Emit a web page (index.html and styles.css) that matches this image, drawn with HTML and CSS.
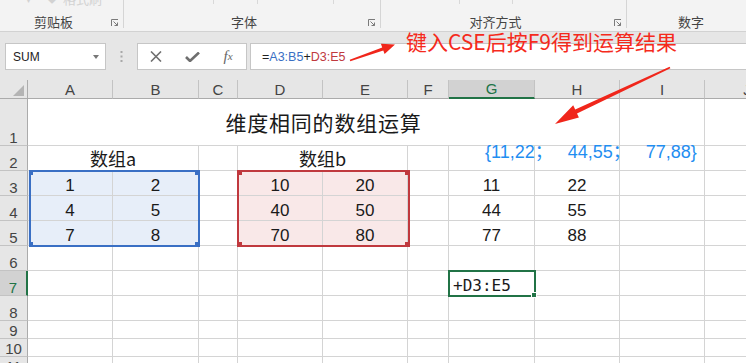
FILE: index.html
```html
<!DOCTYPE html>
<html lang="zh-CN">
<head>
  <meta charset="UTF-8">
  <title>维度相同的数组运算</title>
  <link rel="stylesheet" href="styles.css">
</head>
<body>
  <div class="ribbon">
    <div class="grp g1">
      <div class="gtop"><span class="ghost gdrop">▾</span><span class="ghost gicon">◆</span><span class="ghost gtext">格式刷</span></div>
      <div class="gfoot"><span class="glabel">剪贴板</span><svg class="launch" viewBox="0 0 8 8"><path d="M.5 7V.5H7M2.5 2.5l4 4M3.5 6.5h3v-3" /></svg></div>
    </div>
    <div class="grp g2">
      <div class="gtop"><i class="tick" style="margin-left:89px"></i><i class="tick" style="margin-left:43px"></i><i class="tick" style="margin-left:75px"></i></div>
      <div class="gfoot"><span class="glabel">字体</span><svg class="launch" viewBox="0 0 8 8"><path d="M.5 7V.5H7M2.5 2.5l4 4M3.5 6.5h3v-3" /></svg></div>
    </div>
    <div class="grp g3">
      <div class="gtop"><i class="tick" style="margin-left:78px"></i><i class="tick" style="margin-left:52px"></i></div>
      <div class="gfoot"><span class="glabel">对齐方式</span><svg class="launch" viewBox="0 0 8 8"><path d="M.5 7V.5H7M2.5 2.5l4 4M3.5 6.5h3v-3" /></svg></div>
    </div>
    <div class="grp g4">
      <div class="gtop"></div>
      <div class="gfoot"><span class="glabel">数字</span><svg class="launch" viewBox="0 0 8 8"><path d="M.5 7V.5H7M2.5 2.5l4 4M3.5 6.5h3v-3" /></svg></div>
    </div>
  </div>

  <div class="fbar">
    <div class="namebox"><span>SUM</span><span class="caret"></span></div>
    <div class="dots"><svg width="3" height="11" viewBox="0 0 3 11"><rect x="0.5" y="0" width="2" height="2"/><rect x="0.5" y="4.5" width="2" height="2"/><rect x="0.5" y="9" width="2" height="2"/></svg></div>
    <div class="btns">
      <span class="btn"><svg width="12" height="11" viewBox="0 0 12 11"><path d="M1 .5l10 10M11 .5l-10 10" /></svg></span>
      <span class="btn"><svg class="ok" width="15" height="10" viewBox="0 0 15 10"><path d="M1 5l4 4 9-8.5" /></svg></span>
      <span class="btn fx">f<small>x</small></span>
    </div>
    <div class="formula">=<span class="ref-a">A3:B5</span>+<span class="ref-d">D3:E5</span></div>
  </div>

  <div class="sheet">
    <div class="hd corner"><span class="tri"></span></div>
    <div class="hd">A</div><div class="hd">B</div><div class="hd">C</div><div class="hd">D</div><div class="hd">E</div>
    <div class="hd">F</div><div class="hd on">G</div><div class="hd">H</div><div class="hd">I</div><div class="hd">J</div>

    <div class="rh">1</div><div class="c title">维度相同的数组运算</div><div class="c"></div><div class="c"></div>

    <div class="rh">2</div><div class="c cap">数组a</div><div class="c"></div><div class="c cap">数组b</div>
    <div class="c"></div><div class="c"></div><div class="c"></div><div class="c"></div><div class="c"></div>

    <div class="rh">3</div><div class="c ba">1</div><div class="c ba">2</div><div class="c"></div><div class="c rd">10</div><div class="c rd">20</div>
    <div class="c"></div><div class="c">11</div><div class="c">22</div><div class="c"></div><div class="c"></div>

    <div class="rh">4</div><div class="c ba">4</div><div class="c ba">5</div><div class="c"></div><div class="c rd">40</div><div class="c rd">50</div>
    <div class="c"></div><div class="c">44</div><div class="c">55</div><div class="c"></div><div class="c"></div>

    <div class="rh">5</div><div class="c ba">7</div><div class="c ba">8</div><div class="c"></div><div class="c rd">70</div><div class="c rd">80</div>
    <div class="c"></div><div class="c">77</div><div class="c">88</div><div class="c"></div><div class="c"></div>

    <div class="rh">6</div><div class="c"></div><div class="c"></div><div class="c"></div><div class="c"></div><div class="c"></div>
    <div class="c"></div><div class="c"></div><div class="c"></div><div class="c"></div><div class="c"></div>

    <div class="rh on">7</div><div class="c"></div><div class="c"></div><div class="c"></div><div class="c"></div><div class="c"></div>
    <div class="c"></div><div class="c edit">+D3:E5</div><div class="c"></div><div class="c"></div><div class="c"></div>

    <div class="rh">8</div><div class="c"></div><div class="c"></div><div class="c"></div><div class="c"></div><div class="c"></div>
    <div class="c"></div><div class="c"></div><div class="c"></div><div class="c"></div><div class="c"></div>

    <div class="rh">9</div><div class="c"></div><div class="c"></div><div class="c"></div><div class="c"></div><div class="c"></div>
    <div class="c"></div><div class="c"></div><div class="c"></div><div class="c"></div><div class="c"></div>

    <div class="rh">10</div><div class="c"></div><div class="c"></div><div class="c"></div><div class="c"></div><div class="c"></div>
    <div class="c"></div><div class="c"></div><div class="c"></div><div class="c"></div><div class="c"></div>

    <div class="rh">11</div><div class="c"></div><div class="c"></div><div class="c"></div><div class="c"></div><div class="c"></div>
    <div class="c"></div><div class="c"></div><div class="c"></div><div class="c"></div><div class="c"></div>

    <!-- range highlights and active cell sit over the grid -->
    <div class="rng blue"><i class="hdl tl"></i><i class="hdl tr"></i><i class="hdl bl"></i><i class="hdl br"></i></div>
    <div class="rng red"><i class="hdl tl"></i><i class="hdl tr"></i><i class="hdl bl"></i><i class="hdl br"></i></div>
    <div class="active"><i class="fill"></i></div>
    <div class="result">{11,22；&nbsp;&nbsp;&nbsp;44,55；&nbsp;&nbsp;&nbsp;77,88}</div>
  </div>

  <div class="note">键入CSE后按F9得到运算结果</div>
  <svg class="arrows" width="746" height="363" viewBox="0 0 746 363">
    <polygon points="349.7,59.8 382.2,47.4 380.9,43.7 395,44.5 384.6,54 383.3,50.4 350.3,61.2" />
    <polygon points="669.6,66.8 575.2,109.4 573.2,105.3 555,124 578.9,117.6 577,113.6 670.4,68.2" />
  </svg>
</body>
</html>
```

FILE: styles.css
```css
* { box-sizing: border-box; }
body { margin: 0; width: 746px; height: 363px; overflow: hidden; position: relative; background: #fff; color: #222; font-family: "Liberation Sans", "Noto Sans CJK SC", sans-serif; }

/* ribbon strip */
.ribbon { display: flex; height: 32px; background: #f3f3f3; border-bottom: 1px solid #d2d2d2; }
.grp { flex: none; display: flex; flex-direction: column; height: 28px; border-right: 1px solid #d5d5d5; }
.g1 { width: 124px; }
.g2 { width: 257px; }
.g3 { width: 246px; }
.g4 { width: 144px; border-right: 0; }
.gtop { height: 14px; display: flex; overflow: hidden; }
.tick { display: block; width: 1px; height: 4px; background: #d8d8d8; }
.ghost { color: #d2d2d2; font: 13px/14px "Noto Sans CJK SC", sans-serif; margin-top: -8px; }
.gdrop { margin-left: 26px; font-size: 10px; }
.gicon { margin-left: 16px; font-size: 10px; }
.gtext { margin-left: 6px; }
.gfoot { flex: 1; display: flex; align-items: flex-end; }
.glabel { flex: 1; text-align: center; font: 13px/14px "Noto Sans CJK SC", sans-serif; color: #444; margin-bottom: -1px; }
.launch { width: 8px; height: 8px; margin: 0 4px 1px 4px; fill: none; stroke: #7a7a7a; stroke-width: 1; }

/* formula bar */
.fbar { display: flex; height: 48px; padding-top: 11px; background: #e6e6e6; }
.namebox { flex: none; display: flex; align-items: center; justify-content: space-between; width: 101px; height: 27px; margin-left: 5px; padding: 0 6px 0 7px; background: #fff; border: 1px solid #c6c6c6; font-size: 12px; color: #222; }
.caret { width: 0; height: 0; border-left: 3.5px solid transparent; border-right: 3.5px solid transparent; border-top: 4px solid #777; }
.dots { flex: none; width: 31px; height: 27px; display: flex; align-items: center; justify-content: center; fill: #a8a8a8; }
.btns { flex: none; display: flex; width: 110px; height: 27px; background: #fff; border: 1px solid #c6c6c6; }
.btn { width: 36px; display: flex; align-items: center; justify-content: center; }
.btn svg { fill: none; stroke: #6f6f6f; stroke-width: 1.6; }
.btn svg.ok { stroke-width: 2.6; }
.fx { font: italic 15px/1 "Liberation Serif", serif; color: #666; }
.fx small { font-size: 11px; }
.formula { flex: 1; height: 27px; margin-left: 3px; margin-right: -2px; padding-left: 11px; display: flex; align-items: center; background: #fff; border: 1px solid #c6c6c6; font-size: 12.5px; color: #222; }
.ref-a { color: #3a6fc4; }
.ref-d { color: #c0393e; }

/* sheet grid */
.sheet { position: relative; display: grid; grid-template-columns: 28px 85px 86px 39px 85px 85px 41px 86px 85px 85px 85px; grid-template-rows: 19px 47px repeat(7, 25px) 18px 18px 18px; width: 790px; }
.hd { display: flex; align-items: center; justify-content: center; background: #e6e6e6; border-right: 1px solid #c3c3c3; border-bottom: 1px solid #ababab; font-size: 15px; color: #444; }
.hd.on { background: #d2d2d2; color: #217346; border-bottom: 2px solid #217346; }
.corner { justify-content: flex-end; align-items: flex-end; border-right-color: #ababab; }
.tri { width: 0; height: 0; margin: 0 3px 2px 0; border-left: 11px solid transparent; border-bottom: 11px solid #b4b4b4; }
.rh { display: flex; align-items: flex-end; justify-content: center; background: #e6e6e6; border-right: 1px solid #ababab; border-bottom: 1px solid #c3c3c3; font-size: 15px; line-height: 13px; color: #444; padding-bottom: 1px; }
.rh.on { background: #d2d2d2; color: #217346; border-right: 2px solid #217346; }
.c { display: flex; align-items: flex-end; justify-content: center; border-right: 1px solid #d4d4d4; border-bottom: 1px solid #d4d4d4; font-size: 17px; line-height: 18px; color: #1a1a1a; }
.title { grid-column: span 8; align-items: center; font: 21px/21px "Noto Sans CJK SC", sans-serif; letter-spacing: 0.8px; }
.cap { grid-column: span 2; padding-bottom: 3px; font: 18px/18px "Noto Sans CJK SC", sans-serif; }
.ba { background: #e7eef9; }
.rd { background: #f9e8e8; }
.edit { justify-content: flex-start; padding-left: 4px; font: 16px/18px "DejaVu Sans Mono", monospace; }

.rng { position: absolute; top: 90px; height: 77px; border: 2px solid; }
.rng.blue { left: 29px; width: 171px; border-color: #3a6fc4; }
.rng.red { left: 237px; width: 173px; border-color: #c0393e; }
.hdl { position: absolute; width: 5px; height: 5px; background: currentColor; }
.blue .hdl { color: #3a6fc4; }
.red .hdl { color: #c0393e; }
.tl { left: -2px; top: -2px; }
.tr { right: -2px; top: -2px; }
.bl { left: -2px; bottom: -2px; }
.br { right: -2px; bottom: -2px; }
.blue .tl, .blue .bl { left: -1px; width: 3px; }
.active { position: absolute; left: 448px; top: 190px; width: 88px; height: 27px; border: 2px solid #217346; }
.fill { position: absolute; right: -3px; bottom: -3px; width: 6px; height: 6px; background: #217346; border: 1px solid #fff; }
.result { position: absolute; left: 485px; top: 63px; font-size: 18px; line-height: 18px; color: #1f8ef1; white-space: nowrap; }

/* annotation */
.note { position: absolute; left: 406px; top: 31px; font: 21px/21px "Noto Sans CJK SC", sans-serif; color: #f52a1c; white-space: nowrap; }
.arrows { position: absolute; left: 0; top: 0; fill: #f0261b; pointer-events: none; }
```
